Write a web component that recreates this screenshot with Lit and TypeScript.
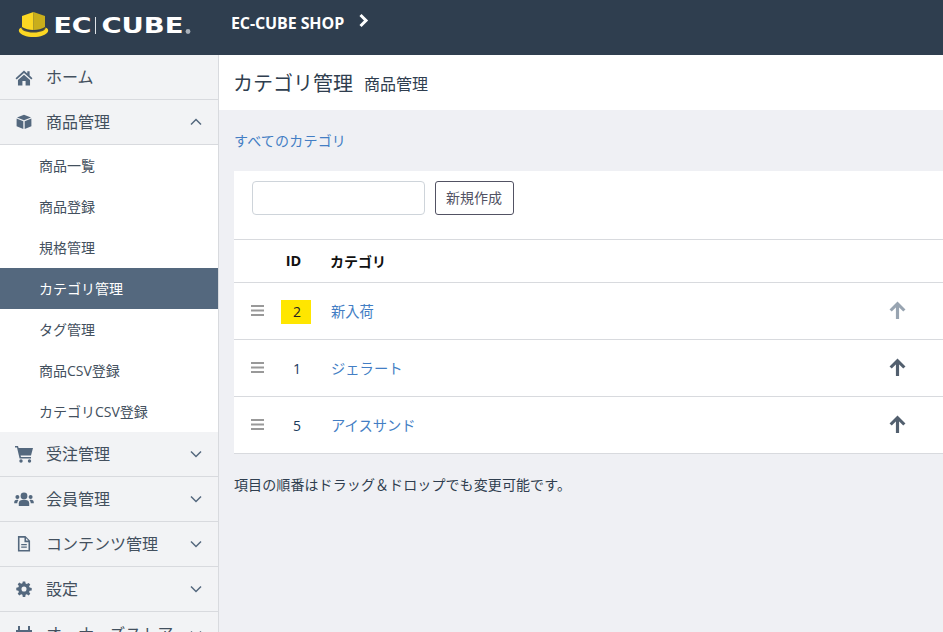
import { LitElement, html, css, svg } from "lit";
import { customElement } from "lit/decorators.js";

const ICONS: Record<string, unknown> = {
  home: svg`<path d="M8.500 1.500 .5 8.600l1.100 1.200L8.500 3.800l6.900 6 1.100-1.200-2.700-2.400V2.200h-2.200v2L8.500 1.500Z"/><path d="M2.800 10.400 8.500 5.400l5.700 5V15.500h-4.200v-4.300H7v4.300H2.800v-5.100Z"/>`,
  box: svg`<path d="M8 0.800 1 3.400 8 6.200l7-2.800L8 .8Z"/><path d="M.6 4.600v7.600L7.300 15V7.300L.6 4.600Z"/><path d="M15.400 4.600 8.700 7.300V15l6.700-2.800V4.600Z"/>`,
  cart: svg`<path d="M0 1h3l.6 2H18l-2 7.500H5.600l.4 1.500h10v1.600H4.600L2 2.600H0V1Z"/><circle cx="6" cy="16" r="1.700"/><circle cx="14.500" cy="16" r="1.700"/>`,
  users: svg`<circle cx="10" cy="5" r="3.400"/><circle cx="3.400" cy="6" r="2"/><circle cx="16.600" cy="6" r="2"/><path d="M4.800 15v-2.800C4.800 10 6.500 9 8 9h4c1.500 0 3.200 1 3.200 3.200V15H4.800Z"/><path d="M.2 11.500C.2 9.500 1.500 8.800 3 8.800c.5 0 1 .1 1.400.4-.8.8-1.200 1.900-1.200 3.100H.2v-.8Z"/><path d="M19.800 11.500c0-2-1.300-2.700-2.800-2.700-.5 0-1 .1-1.400.4.8.8 1.200 1.900 1.200 3.100h3v-.8Z"/>`,
  file: svg`<path fill-rule="evenodd" d="M1 0h8l5 5v11.500H1V0Zm1.700 1.700v13.100h9.600V6.500H8V1.700H2.700Zm7 .6v2.500h2.500L9.700 2.300ZM4.500 8.500h6v1.300h-6V8.500Zm0 2.800h6v1.300h-6v-1.300Z"/>`,
  gear: svg`<path fill-rule="evenodd" d="M6.700 0h2.600l.4 2.200 1.300.6L12.900 1.500l1.800 1.800-1.300 1.900.6 1.300 2.200.4v2.600l-2.200.4-.6 1.300 1.300 1.900-1.800 1.800-1.900-1.300-1.300.6-.4 2.200H6.700l-.4-2.200-1.300-.6-1.900 1.300-1.800-1.800 1.300-1.900-.6-1.300L-.2 9.200V6.600L2 6.200l.6-1.300L1.300 3l1.800-1.800L5 2.500l1.300-.6L6.700 0ZM8 5.300a2.700 2.700 0 1 0 0 5.400 2.700 2.700 0 0 0 0-5.400Z"/>`,
  store: svg`<path d="M2 0h2v4h8V0h2v4h2v2H0V4h2V0Z"/><path d="M2 7h2v5h8V7h2v7H2V7Z"/>`,
};

const VB: Record<string, string> = {
  home: "0 0 17 16", box: "0 0 16 16", cart: "0 0 18 18", users: "0 0 20 16",
  file: "0 0 15 17", gear: "-.5 0 17 16", store: "0 0 16 16",
};

@customElement("app-root")
export class AppRoot extends LitElement {
  static styles = css`
    :host { display: block; width: 943px; height: 632px; overflow: hidden; background: #eff0f4;
      font-family: "Open Sans", "Noto Sans CJK JP", sans-serif; color: #2f3e4f; font-size: 14px; }
    .header { height: 55px; background: #2f3e4f; display: flex; align-items: center; color: #fff; }
    .logo { width: 231px; height: 55px; flex: none; display: block; }
    .shop { font-weight: 700; font-size: 16px; letter-spacing: -.1px; padding-bottom: 10px; }
    .shop-arrow { margin: 0 0 14px 13px; width: 13px; height: 15px; }
    .body { display: flex; height: 577px; }
    .side { width: 218px; flex: none; background: #f2f3f5; border-right: 1px solid #d8dade; overflow: hidden; }
    .item { height: 45px; box-sizing: border-box; border-bottom: 1px solid #d8dade; display: flex; align-items: center; font-size: 16px; color: #43505e; }
    .item .ic { width: 46px; flex: none; display: flex; justify-content: center; padding-left: 2px; box-sizing: border-box; }
    .item .ic svg { fill: #54687e; display: block; }
    .item .lbl { flex: 1; padding-bottom: 2px; }
    .item .chev { width: 14px; height: 10px; margin-right: 15px; fill: none; stroke: #54687e; stroke-width: 1.5; }
    .subs { background: #fff; }
    .sub { height: 41px; box-sizing: border-box; padding: 0 0 2px 39px; display: flex; align-items: center; font-size: 14px; color: #43505e; }
    .sub.on { background: #54687e; color: #fff; }
    .main { flex: 1; min-width: 0; }
    .title { height: 55px; background: #fff; display: flex; align-items: center; padding-left: 15px; gap: 11px; color: #2f3e4f; }
    .title h1 { margin: 0 0 0 -1px; font-size: 20px; font-weight: 400; }
    .title span { font-size: 16px; }
    .crumb { height: 61px; box-sizing: border-box; padding: 20px 0 0 15px; font-size: 14px; letter-spacing: .2px; }
    a { color: #437ec4; text-decoration: none; }
    .card { margin-left: 15px; background: #fff; }
    .tools { height: 69px; box-sizing: border-box; padding: 10px 0 0 18px; display: flex; gap: 10px; align-items: flex-start; border-bottom: 1px solid #d8dade; }
    .input { width: 173px; height: 34px; box-sizing: border-box; border: 1px solid #ced4da; border-radius: 4px; background: #fff; }
    .btn { width: 79px; height: 34px; box-sizing: border-box; border: 1px solid #525263; border-radius: 3px; background: #fff; color: #525263; font: inherit; font-size: 14px; padding: 0 1px 3px 0; }
    .row { display: grid; grid-template-columns: 47px 30px 20px 1fr 90px; align-items: center; height: 57px; box-sizing: border-box; border-bottom: 1px solid #d8dade; }
    .row.head { height: 43px; font-weight: 700; color: #111; font-size: 14px; }
    .row.head .id { text-align: center; font-size: 14.500px; font-family: "Open Sans", sans-serif; color: #111; padding-right: 7px; box-sizing: border-box; margin-top: -1px; }
    .row.head .name { grid-column: 4; font-size: 14px; padding-bottom: 1px; margin-left: -1px; }
    .bars { width: 13px; height: 11px; margin: -1px 0 0 17px; fill: #999; display: block; }
    .id { text-align: center; font-size: 14px; line-height: 24px; color: #1a3a5c; padding-left: 2px; box-sizing: border-box; margin-top: 1px; }
    .id.hl { background: #ffe600; color: #222; }
    .name { grid-column: 4; font-size: 14.300px; padding-bottom: 2px; }
    .up { width: 19px; height: 19px; margin: -1px 0 0 35px; fill: none; stroke: #525f6e; stroke-width: 3; display: block; }
    .up.dim { stroke: #98a4b1; }
    .note { margin: 20px 0 0 15px; font-size: 14px; letter-spacing: .1px; color: #2f3e4f; }
  `;

  private chev(up: boolean) {
    return html`<svg class="chev" viewBox="0 0 14 10"><path d=${up ? "M2 7.500 7 2.500l5 5" : "M2 2.500l5 5 5-5"}/></svg>`;
  }

  private item(icon: string, label: string, opt: { w?: number; h?: number; chev?: boolean; up?: boolean } = {}) {
    const w = opt.w ?? 17, h = opt.h ?? 16;
    return html`<div class="item">
      <span class="ic"><svg viewBox=${VB[icon]} style="width:${w}px;height:${h}px">${ICONS[icon]}</svg></span>
      <span class="lbl">${label}</span>
      ${opt.chev ? this.chev(!!opt.up) : ""}
    </div>`;
  }

  private row(id: number, name: string, hl: boolean, dim: boolean) {
    return html`<div class="row">
      <svg class="bars" viewBox="0 0 13 11"><rect y="0" width="13" height="2"/><rect y="4.500" width="13" height="2"/><rect y="9" width="13" height="2"/></svg>
      <div class="id ${hl ? "hl" : ""}">${id}</div>
      <div></div>
      <a class="name">${name}</a>
      <svg class="up ${dim ? "dim" : ""}" viewBox="0 0 18 18"><path d="M9 17V3M2.500 9 9 2.500 15.500 9"/></svg>
    </div>`;
  }

  render() {
    const subs = ["商品一覧", "商品登録", "規格管理", "カテゴリ管理", "タグ管理", "商品CSV登録", "カテゴリCSV登録"];
    return html`
      <div class="header">
        <svg class="logo" viewBox="0 0 231 55">
          <path d="M33.500 12 22 16v11c3 2 7 3 11.500 3z" fill="#fbd723"/>
          <path d="M33.500 12 45 16v11c-3 2-7 3-11.500 3z" fill="#c9ae1b"/>
          <path d="M22 27.500c2 2.500 6 4 11.500 4s9.500-1.500 11.500-4v3c-2.500 1.500-6 2-11.500 2s-9-.5-11.500-2z" fill="#55503a"/>
          <path d="M21.500 27.500c-2.500 1-3 2.500-2.500 4 1.500 3.500 7.500 5.500 14.500 5.500s13-2 14.500-5.500c.5-1.500 0-3-2.500-4 .5 2.500-4 5-12 5s-12.500-2.500-12-5Z" fill="#fbd723"/>
          <g fill="#fff" font-family="'DejaVu Sans',sans-serif" font-weight="700" font-size="22">
            <text x="53.500" y="33" textLength="38" lengthAdjust="spacingAndGlyphs">EC</text>
            <text x="101.500" y="33" textLength="82" lengthAdjust="spacingAndGlyphs">CUBE</text>
          </g>
          <rect x="95" y="17" width="1" height="17" fill="#dfe3e8"/>
          <circle cx="188" cy="31.500" r="2.400" fill="#aab2bb"/>
        </svg>
        <span class="shop">EC-CUBE SHOP</span>
        <svg class="shop-arrow" viewBox="0 0 13 15"><path d="M3.500 2 9 7.500 3.500 13" fill="none" stroke="#fff" stroke-width="3"/></svg>
      </div>
      <div class="body">
        <nav class="side">
          ${this.item("home", "ホーム", { w: 18, h: 17 })}
          ${this.item("box", "商品管理", { w: 16, h: 16, chev: true, up: true })}
          <div class="subs">${subs.map((s) => html`<div class="sub ${s === "カテゴリ管理" ? "on" : ""}">${s}</div>`)}</div>
          ${this.item("cart", "受注管理", { w: 18, h: 18, chev: true })}
          ${this.item("users", "会員管理", { w: 20, h: 16, chev: true })}
          ${this.item("file", "コンテンツ管理", { w: 14, h: 16, chev: true })}
          ${this.item("gear", "設定", { w: 16, h: 16, chev: true })}
          ${this.item("store", "オーナーズストア", { w: 16, h: 16, chev: true })}
        </nav>
        <main class="main">
          <div class="title"><h1>カテゴリ管理</h1><span>商品管理</span></div>
          <div class="crumb"><a>すべてのカテゴリ</a></div>
          <div class="card">
            <div class="tools"><div class="input"></div><button class="btn">新規作成</button></div>
            <div class="row head"><div></div><div class="id">ID</div><div></div><div class="name">カテゴリ</div></div>
            ${this.row(2, "新入荷", true, true)}
            ${this.row(1, "ジェラート", false, false)}
            ${this.row(5, "アイスサンド", false, false)}
          </div>
          <p class="note">項目の順番はドラッグ＆ドロップでも変更可能です。</p>
        </main>
      </div>
    `;
  }
}
